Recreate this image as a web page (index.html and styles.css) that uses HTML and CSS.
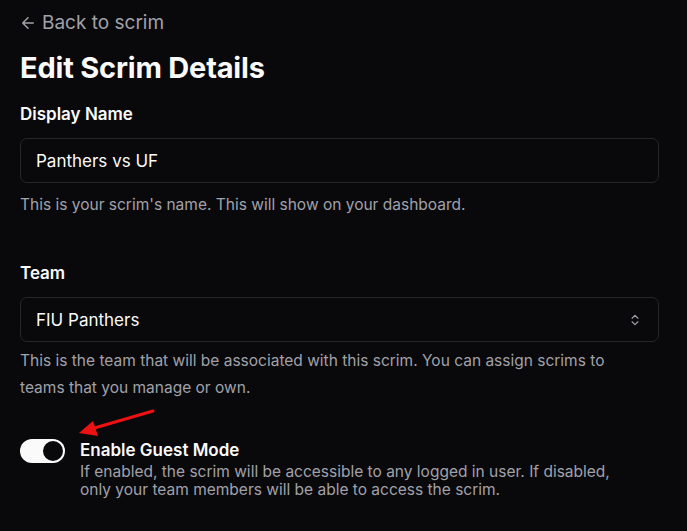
FILE: index.html
```html
<!DOCTYPE html>
<html>
<head>
<meta charset="utf-8">
<link rel="stylesheet" href="styles.css">
</head>
<body>
<main class="page">
  <a class="back" href="#"><svg class="back-icon" viewBox="0 0 24 24" width="18" height="18"><path d="M19 12H5M12 19l-7-7 7-7" fill="none" stroke="currentColor" stroke-width="2" stroke-linecap="round" stroke-linejoin="round"/></svg>Back to scrim</a>
  <h1 class="title">Edit Scrim Details</h1>

  <section class="field">
    <label class="label">Display Name</label>
    <div class="input">Panthers vs UF</div>
    <p class="desc">This is your scrim's name. This will show on your dashboard.</p>
  </section>

  <section class="field team">
    <label class="label">Team</label>
    <div class="input select">
      <span>FIU Panthers</span>
      <svg class="chev" viewBox="0 0 24 24" width="14" height="14"><path d="M7 15l5 5 5-5M7 9l5-5 5 5" fill="none" stroke="currentColor" stroke-width="2" stroke-linecap="round" stroke-linejoin="round"/></svg>
    </div>
    <p class="desc loose">This is the team that will be associated with this scrim. You can assign scrims to teams that you manage or own.</p>
  </section>

  <section class="guest">
    <div class="switch"><span class="knob"></span></div>
    <div class="guest-text">
      <div class="guest-label">Enable Guest Mode</div>
      <p class="guest-desc">If enabled, the scrim will be accessible to any logged in user. If disabled, only your team members will be able to access the scrim.</p>
    </div>
    <svg class="arrow" width="80" height="30" viewBox="0 0 80 30"><line x1="76" y1="3" x2="14" y2="21" stroke="#ee1111" stroke-width="3" stroke-linecap="round"/><polygon points="2,25 16,13 21,28" fill="#ee1111"/></svg>
  </section>
</main>
</body>
</html>
```

FILE: styles.css
```css
* { box-sizing: border-box; }
html, body { margin: 0; padding: 0; background: #09090b; }
body {
  font-family: Inter, "Noto Sans", sans-serif;
  color: #fafafa;
  width: 687px;
  height: 531px;
  overflow: hidden;
}
.page {
  padding: 11px 28px 0 20px;
  display: flex;
  flex-direction: column;
}
.back {
  display: flex;
  align-items: center;
  gap: 5px;
  color: #a1a1aa;
  text-decoration: none;
  font-size: 19px;
  line-height: 24px;
  width: max-content;
}
.back-icon { margin-left: -1px; }
.title {
  margin: 16px 0 0;
  font-size: 29px;
  line-height: 34px;
  font-weight: 700;
  letter-spacing: -0.2px;
}
.field { display: flex; flex-direction: column; }
.field:first-of-type { margin-top: 18px; }
.label {
  font-size: 17px;
  font-weight: 600;
  line-height: 22px;
}
.input {
  margin-top: 13px;
  height: 45px;
  border: 1px solid #27272a;
  border-radius: 7px;
  padding: 0 15px;
  display: flex;
  align-items: center;
  font-size: 17px;
}
.select { justify-content: space-between; }
.chev { color: #a1a1aa; margin-right: 1px; }
.desc {
  margin: 12px 0 0;
  color: #a1a1aa;
  font-size: 15.5px;
  line-height: 20px;
  max-width: 620px;
}
.loose { line-height: 27px; margin-top: 5px; }
.team { margin-top: 47px; }
.guest {
  position: relative;
  margin-top: 38px;
  display: flex;
  gap: 15px;
  align-items: flex-start;
}
.switch {
  width: 45px;
  height: 24px;
  border-radius: 12px;
  background: #fafafa;
  display: flex;
  align-items: center;
  justify-content: flex-end;
  padding: 2px;
  flex-shrink: 0;
}
.knob {
  width: 20px;
  height: 20px;
  border-radius: 50%;
  background: #09090b;
}
.guest-text { max-width: 562px; }
.guest-label {
  font-size: 17px;
  font-weight: 600;
  line-height: 22px;
}
.guest-desc {
  margin: 2px 0 0;
  color: #a1a1aa;
  font-size: 15.5px;
  line-height: 18px;
}
.arrow {
  position: absolute;
  left: 57px;
  top: -31px;
}
```
